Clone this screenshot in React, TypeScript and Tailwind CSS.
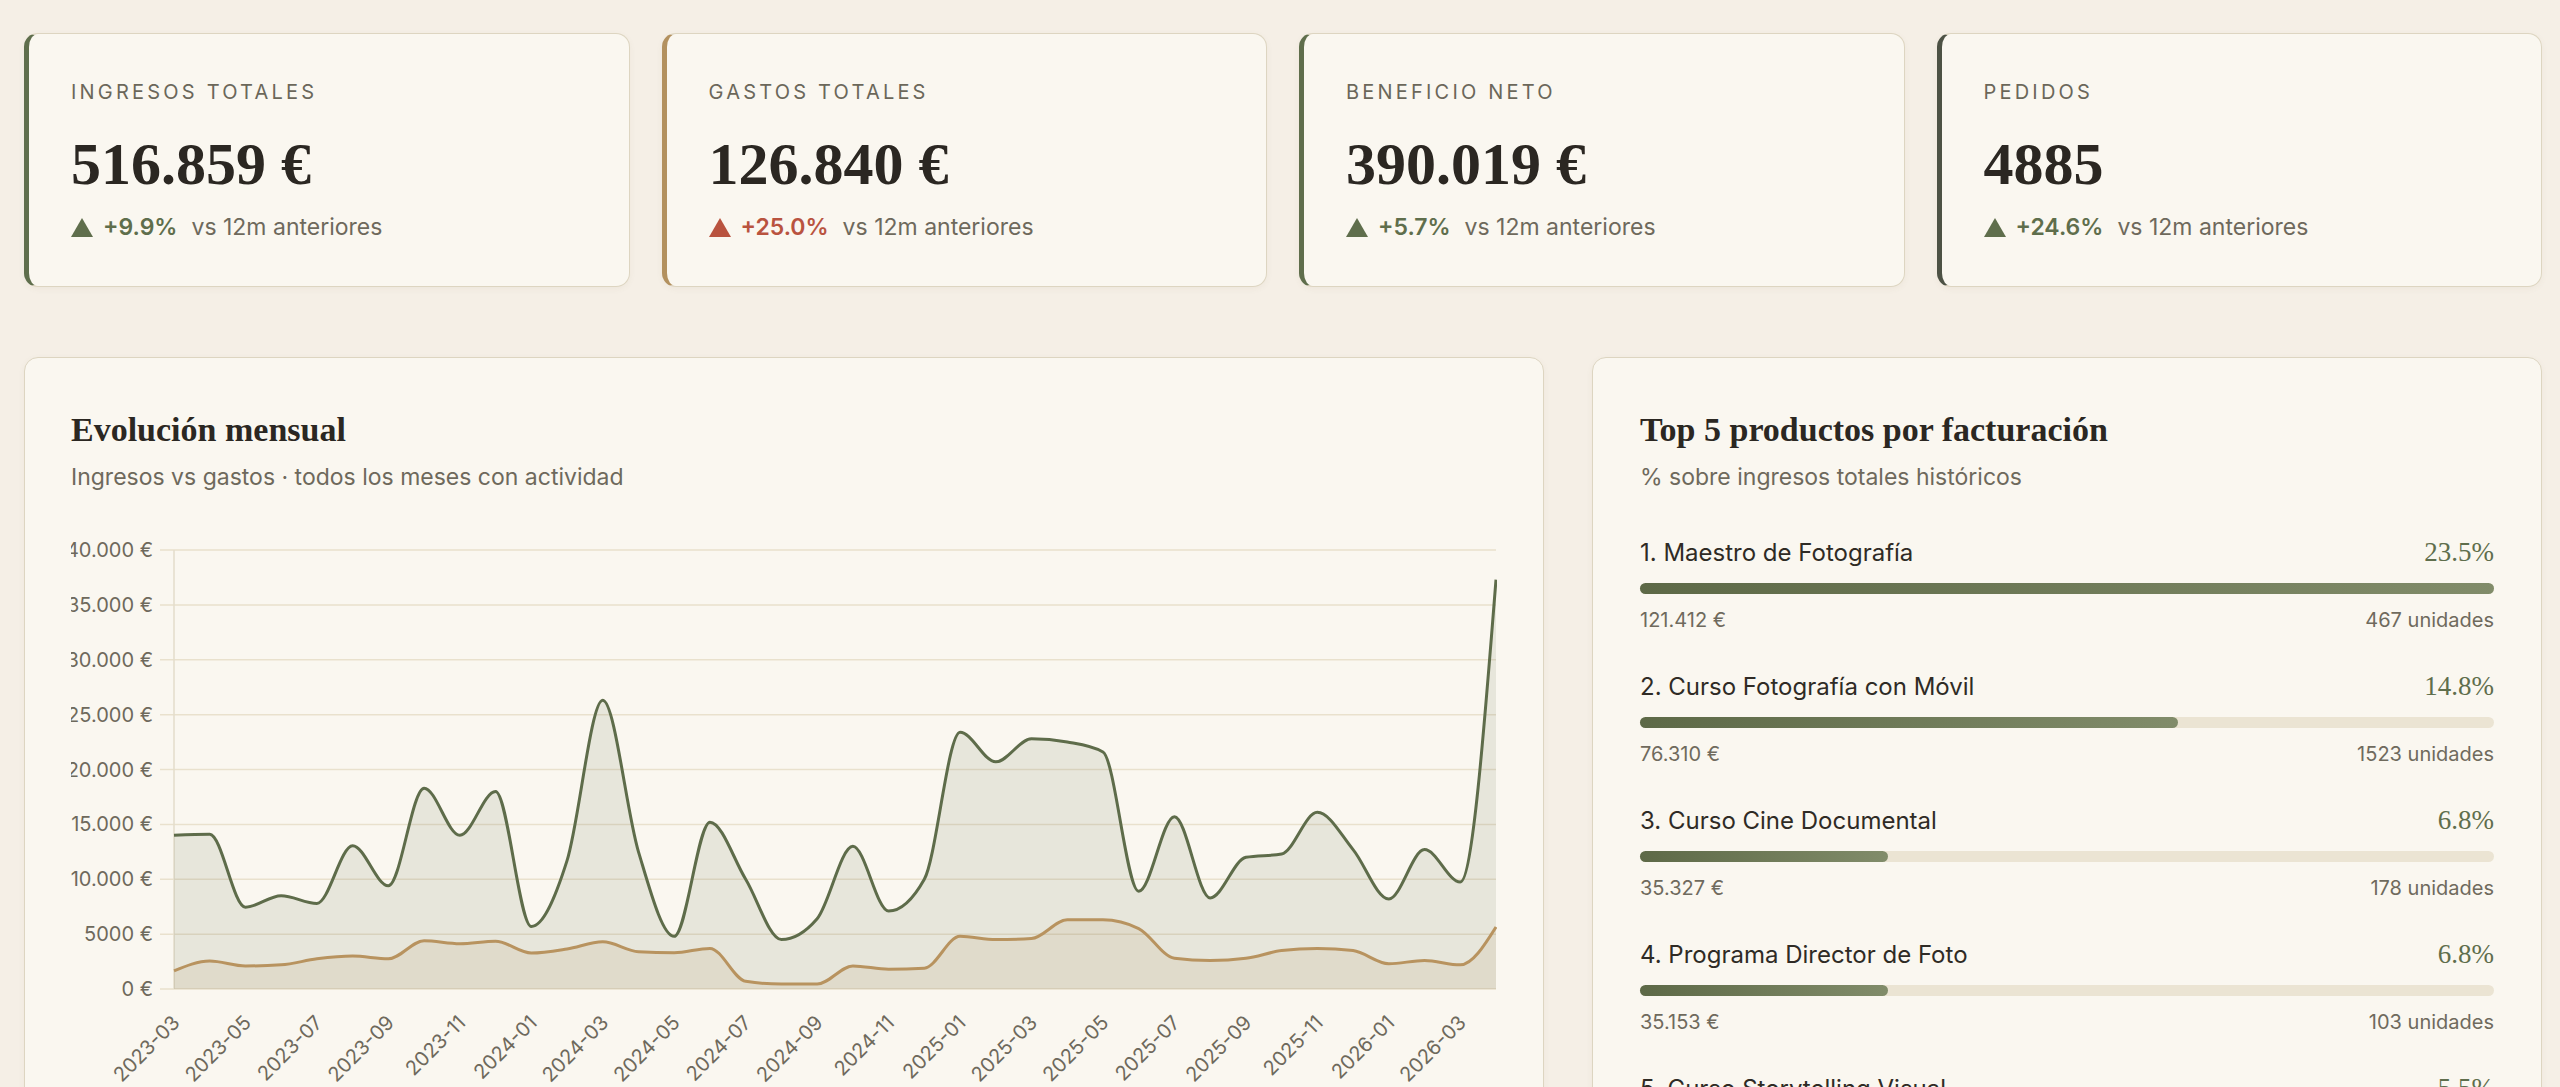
import React from 'react';

type Kpi = {
  label: string;
  value: string;
  delta: string;
  accent: string;
  deltaColor: string;
};

const kpis: Kpi[] = [
  { label: 'Ingresos totales', value: '516.859 €', delta: '+9.9%', accent: 'border-l-[#5f6e4c]', deltaColor: 'text-[#5f6e4c]' },
  { label: 'Gastos totales', value: '126.840 €', delta: '+25.0%', accent: 'border-l-[#b3915f]', deltaColor: 'text-[#b9533f]' },
  { label: 'Beneficio neto', value: '390.019 €', delta: '+5.7%', accent: 'border-l-[#5f6e4c]', deltaColor: 'text-[#5f6e4c]' },
  { label: 'Pedidos', value: '4885', delta: '+24.6%', accent: 'border-l-[#4d5245]', deltaColor: 'text-[#5f6e4c]' },
];

const products = [
  { name: '1. Maestro de Fotografía', pct: '23.5%', w: 100, amount: '121.412 €', units: '467 unidades' },
  { name: '2. Curso Fotografía con Móvil', pct: '14.8%', w: 63, amount: '76.310 €', units: '1523 unidades' },
  { name: '3. Curso Cine Documental', pct: '6.8%', w: 29, amount: '35.327 €', units: '178 unidades' },
  { name: '4. Programa Director de Foto', pct: '6.8%', w: 29, amount: '35.153 €', units: '103 unidades' },
  { name: '5. Curso Storytelling Visual', pct: '5.5%', w: 23.4, amount: '28.390 €', units: '241 unidades' },
];

// monthly figures, 2023-03 .. 2026-04
const income = [
  14000, 14100, 7450, 8500, 7800, 13050, 9400, 18300, 14000, 18000, 5700, 11700, 26300, 12500, 4800, 15200, 10000, 4500, 6400,
  13000, 7100, 10000, 23400, 20700, 22800, 22500, 21600, 8900, 15700, 8300, 12000, 12300, 16100, 12700, 8200, 12700, 9750, 37300,
];
const expense = [
  1650, 2550, 2100, 2200, 2750, 3000, 2750, 4400, 4130, 4350, 3280, 3650, 4300, 3400, 3300, 3700, 700, 450, 450, 2100, 1800,
  1900, 4800, 4500, 4600, 6300, 6300, 5500, 2800, 2600, 2800, 3500, 3700, 3500, 2300, 2600, 2200, 5650,
];

const months = income.map((_, i) => {
  const m = 2 + i; // 0-based month from Jan 2023
  const y = 2023 + Math.floor(m / 12);
  return `${y}-${String((m % 12) + 1).padStart(2, '0')}`;
});

const PLOT = { left: 103, right: 1425, top: 27, bottom: 466 };
const xAt = (i: number) => PLOT.left + (i * (PLOT.right - PLOT.left)) / (income.length - 1);
const yAt = (v: number) => PLOT.bottom - (v / 40000) * (PLOT.bottom - PLOT.top);

function monotonePath(pts: [number, number][]) {
  const n = pts.length;
  const t: number[] = new Array(n).fill(0);
  const sign = (v: number) => (v < 0 ? -1 : 1);
  for (let i = 1; i < n - 1; i++) {
    const [x0, y0] = pts[i - 1];
    const [x1, y1] = pts[i];
    const [x2, y2] = pts[i + 1];
    const h0 = x1 - x0;
    const h1 = x2 - x1;
    const s0 = (y1 - y0) / h0;
    const s1 = (y2 - y1) / h1;
    const p = (s0 * h1 + s1 * h0) / (h0 + h1);
    t[i] = (sign(s0) + sign(s1)) * Math.min(Math.abs(s0), Math.abs(s1), 0.5 * Math.abs(p)) || 0;
  }
  const h = pts[1][0] - pts[0][0];
  t[0] = ((3 * (pts[1][1] - pts[0][1])) / h - t[1]) / 2;
  t[n - 1] = ((3 * (pts[n - 1][1] - pts[n - 2][1])) / h - t[n - 2]) / 2;
  let d = `M${pts[0][0]},${pts[0][1]}`;
  for (let i = 0; i < n - 1; i++) {
    const [x0, y0] = pts[i];
    const [x1, y1] = pts[i + 1];
    const dx = (x1 - x0) / 3;
    d += `C${x0 + dx},${y0 + dx * t[i]},${x1 - dx},${y1 - dx * t[i + 1]},${x1},${y1}`;
  }
  return d;
}

const ticks = [40000, 35000, 30000, 25000, 20000, 15000, 10000, 5000, 0];
const fmtTick = (v: number) => (v >= 10000 ? `${v / 1000}.000 €` : `${v} €`);

function MonthlyChart() {
  const incLine = monotonePath(income.map((v, i) => [xAt(i), yAt(v)]));
  const expLine = monotonePath(expense.map((v, i) => [xAt(i), yAt(v)]));
  const close = `L${PLOT.right},${PLOT.bottom}L${PLOT.left},${PLOT.bottom}Z`;

  return (
    <svg width="1426" height="600" className="mt-[32px] block font-['Inter',sans-serif]">
      {/* grid + y axis */}
      {ticks.map((v) => (
        <g key={v}>
          <line x1={PLOT.left - 14} x2={PLOT.right} y1={yAt(v)} y2={yAt(v)} stroke="#e9e1cd" strokeWidth="1.5" />
          <text x={82} y={yAt(v)} textAnchor="end" dominantBaseline="central" fontSize="20" fill="#6e695c">
            {fmtTick(v)}
          </text>
        </g>
      ))}
      <line x1={PLOT.left} x2={PLOT.left} y1={PLOT.top} y2={PLOT.bottom} stroke="#e3dccb" strokeWidth="1.5" />

      <path d={incLine + close} fill="#5f6b4a" fillOpacity="0.12" />
      <path d={expLine + close} fill="#b08d5b" fillOpacity="0.12" />
      <path d={incLine} fill="none" stroke="#5e6c4a" strokeWidth="3" />
      <path d={expLine} fill="none" stroke="#b8935f" strokeWidth="3" />

      {months.map((m, i) =>
        i % 2 === 0 ? (
          <text
            key={m}
            transform={`translate(${xAt(i) + 2},${PLOT.bottom + 30}) rotate(-45)`}
            textAnchor="end"
            dominantBaseline="central"
            fontSize="20"
            fill="#6e695c"
          >
            {m}
          </text>
        ) : null
      )}
    </svg>
  );
}

function KpiCard({ kpi }: { kpi: Kpi }) {
  return (
    <div
      className={`h-[254px] rounded-[14px] border border-l-[5px] border-[#ddd5c1] ${kpi.accent} bg-[#faf7f0] pl-[42px] pt-[44px] shadow-[0_2px_6px_rgba(120,100,60,0.06)]`}
    >
      <div className="text-[20px] leading-[28px] tracking-[0.16em] uppercase text-[#6b675a]">{kpi.label}</div>
      <div className="mt-[27px] font-['Liberation_Serif',serif] text-[60px] leading-[62px] font-bold text-[#2b2722]">
        {kpi.value}
      </div>
      <div className="mt-[16px] flex items-center text-[23px] leading-[32px]">
        <svg width="22" height="19" viewBox="0 0 22 19" className={kpi.deltaColor}>
          <polygon points="11,0 22,19 0,19" fill="currentColor" />
        </svg>
        <span className={`ml-[10px] font-semibold ${kpi.deltaColor}`}>{kpi.delta}</span>
        <span className="ml-[14px] text-[#6e695c]">vs 12m anteriores</span>
      </div>
    </div>
  );
}

export default function App() {
  return (
    <div className="min-h-screen bg-[#f5efe6] pl-6 pr-[18px] pt-[33px] font-['Inter',sans-serif]">
      <div className="grid grid-cols-4 gap-8">
        {kpis.map((k) => (
          <KpiCard key={k.label} kpi={k} />
        ))}
      </div>

      <div className="mt-[70px] grid grid-cols-[1520fr_950fr] gap-12">
        {/* monthly evolution */}
        <div className="overflow-hidden rounded-[14px] border border-[#ddd5c1] bg-[#faf7f0] px-[46px] pt-[52px] pb-10 shadow-[0_2px_6px_rgba(120,100,60,0.06)]">
          <h2 className="font-['Liberation_Serif',serif] text-[34px] leading-[40px] font-bold text-[#2b2722]">
            Evolución mensual
          </h2>
          <p className="mt-[13px] text-[23px] leading-[28px] text-[#6e695c]">
            Ingresos vs gastos · todos los meses con actividad
          </p>
          <MonthlyChart />
        </div>

        {/* top products */}
        <div className="rounded-[14px] border border-[#ddd5c1] bg-[#faf7f0] px-[47px] pt-[52px] pb-10 shadow-[0_2px_6px_rgba(120,100,60,0.06)]">
          <h2 className="font-['Liberation_Serif',serif] text-[34px] leading-[40px] font-bold text-[#2b2722]">
            Top 5 productos por facturación
          </h2>
          <p className="mt-[13px] text-[23px] leading-[28px] text-[#6e695c]">% sobre ingresos totales históricos</p>

          <div className="mt-[45px] flex flex-col gap-[37px]">
            {products.map((p) => (
              <div key={p.name}>
                <div className="flex items-baseline justify-between leading-[32px]">
                  <span className="text-[24px] text-[#2f2b25]">{p.name}</span>
                  <span className="font-['Liberation_Serif',serif] text-[27px] text-[#5f6e4c]">{p.pct}</span>
                </div>
                <div className="mt-[14px] h-[11px] rounded-full bg-[#ebe4d3]">
                  <div
                    className="h-full rounded-full bg-linear-to-r from-[#5d6947] to-[#818c6a]"
                    style={{ width: `${p.w}%` }}
                  />
                </div>
                <div className="mt-[13px] flex justify-between text-[20px] leading-[26px] text-[#6f6a5d]">
                  <span>{p.amount}</span>
                  <span>{p.units}</span>
                </div>
              </div>
            ))}
          </div>
        </div>
      </div>
    </div>
  );
}
